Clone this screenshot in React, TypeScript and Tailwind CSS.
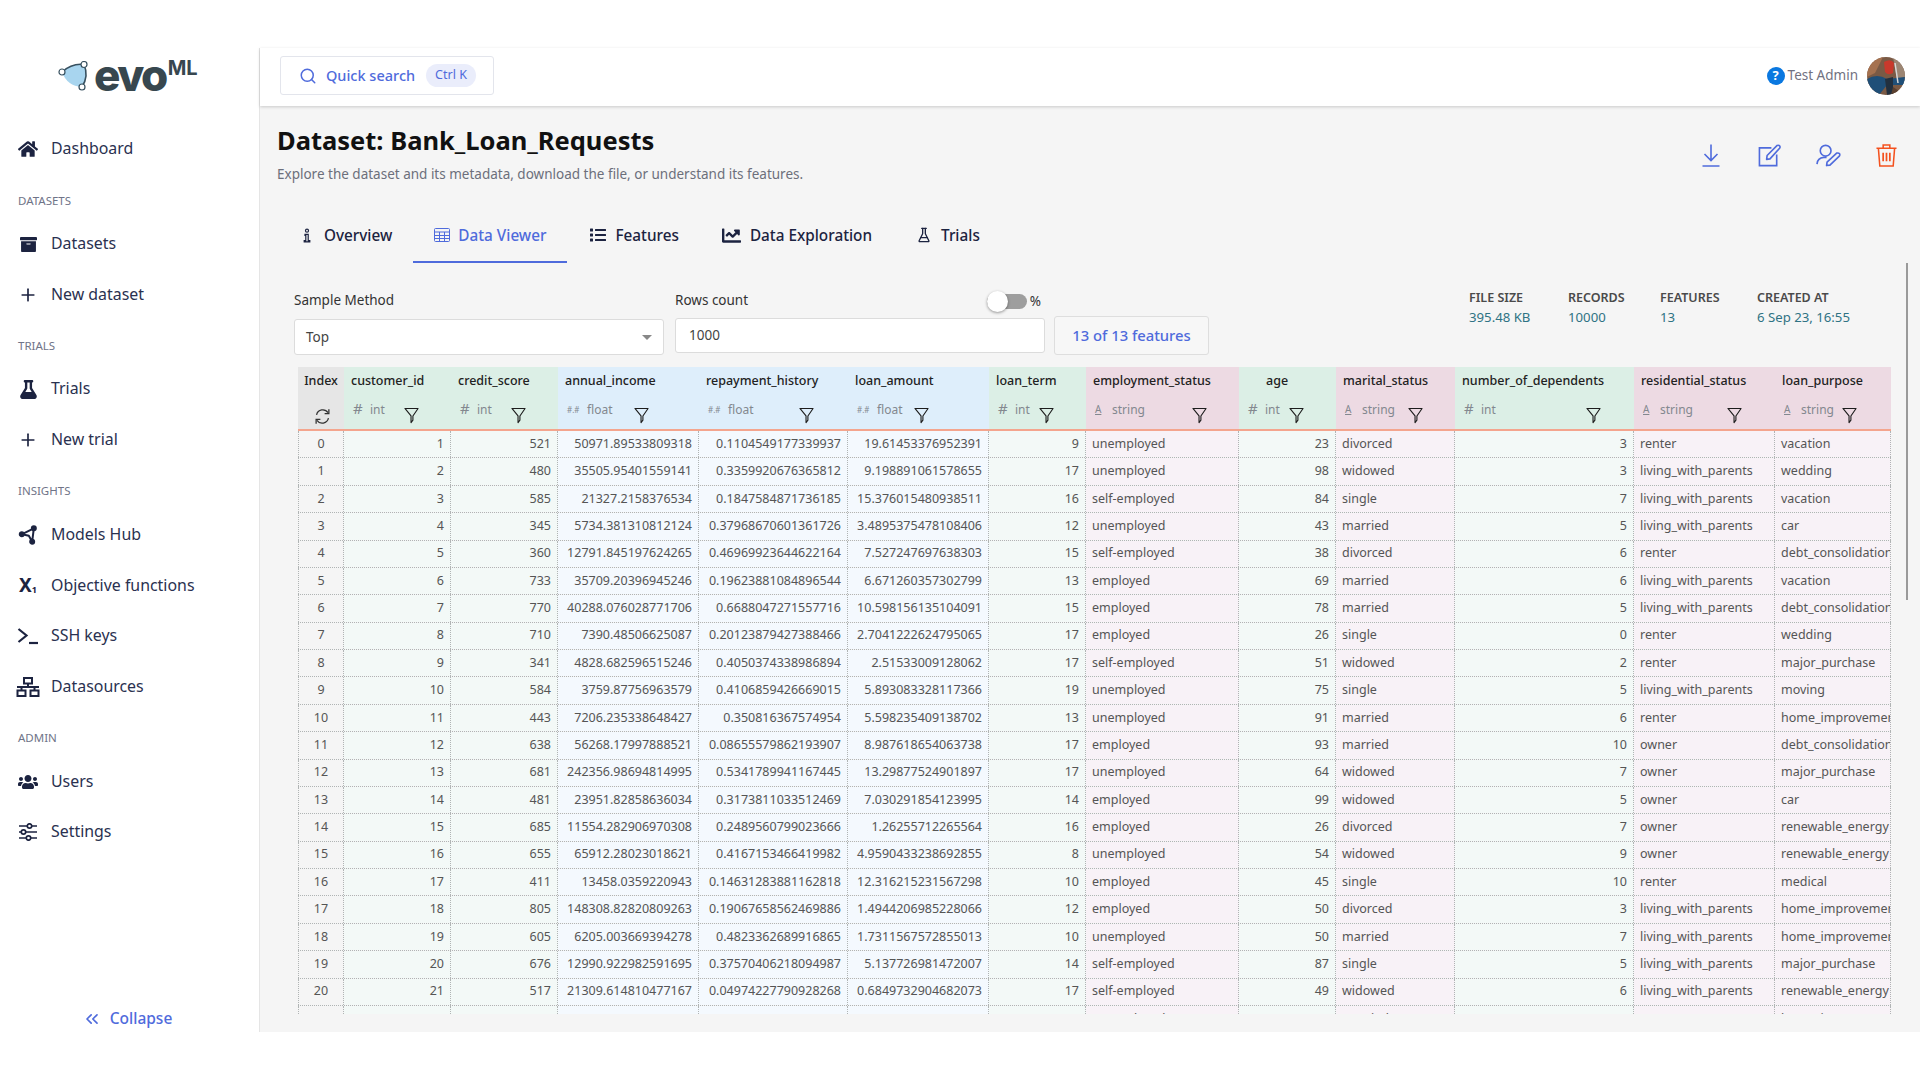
// Dataset page — Data Viewer tab
import React from 'react';
import { FaHome, FaArchive, FaFlask, FaUsers, FaList, FaChartLine } from 'react-icons/fa';
import { LuPlus, LuChevronsLeft, LuSearch, LuFlaskConical } from 'react-icons/lu';

const FONT = "font-['Noto_Sans',sans-serif]";

type Kind = 'int' | 'float' | 'string';

interface Col {
  name: string;
  kind: Kind;
  width: string;
  filterPad: string;
  namePad?: string;
}

const COLS: Col[] = [
  { name: 'customer_id', kind: 'int', width: 'w-[107px]', filterPad: 'pr-[32px]' },
  { name: 'credit_score', kind: 'int', width: 'w-[107px]', filterPad: 'pr-[32px]' },
  { name: 'annual_income', kind: 'float', width: 'w-[141px]', filterPad: 'pr-[50px]' },
  { name: 'repayment_history', kind: 'float', width: 'w-[149px]', filterPad: 'pr-[34px]' },
  { name: 'loan_amount', kind: 'float', width: 'w-[141px]', filterPad: 'pr-[60px]' },
  { name: 'loan_term', kind: 'int', width: 'w-[97px]', filterPad: 'pr-[32px]' },
  { name: 'employment_status', kind: 'string', width: 'w-[153px]', filterPad: 'pr-[32px]' },
  { name: 'age', kind: 'int', width: 'w-[97px]', filterPad: 'pr-[32px]', namePad: 'pl-[27px]' },
  { name: 'marital_status', kind: 'string', width: 'w-[119px]', filterPad: 'pr-[32px]' },
  { name: 'number_of_dependents', kind: 'int', width: 'w-[179px]', filterPad: 'pr-[33px]' },
  { name: 'residential_status', kind: 'string', width: 'w-[141px]', filterPad: 'pr-[33px]' },
  { name: 'loan_purpose', kind: 'string', width: 'w-[116px]', filterPad: 'pr-[34px]' },
];

const HEAD_BG: Record<Kind, string> = {
  int: 'bg-[#dcefe6]',
  float: 'bg-[#deeefb]',
  string: 'bg-[#eddae3]',
};

const CELL_BG: Record<Kind, string> = {
  int: 'bg-[#f3f9f7]',
  float: 'bg-[#f4f9fe]',
  string: 'bg-[#f8f2f7]',
};

const ROWS: string[][] = [
  ['1', '521', '50971.89533809318', '0.1104549177339937', '19.61453376952391', '9', 'unemployed', '23', 'divorced', '3', 'renter', 'vacation'],
  ['2', '480', '35505.95401559141', '0.3359920676365812', '9.198891061578655', '17', 'unemployed', '98', 'widowed', '3', 'living_with_parents', 'wedding'],
  ['3', '585', '21327.2158376534', '0.1847584871736185', '15.376015480938511', '16', 'self-employed', '84', 'single', '7', 'living_with_parents', 'vacation'],
  ['4', '345', '5734.381310812124', '0.37968670601361726', '3.4895375478108406', '12', 'unemployed', '43', 'married', '5', 'living_with_parents', 'car'],
  ['5', '360', '12791.845197624265', '0.46969923644622164', '7.527247697638303', '15', 'self-employed', '38', 'divorced', '6', 'renter', 'debt_consolidation'],
  ['6', '733', '35709.20396945246', '0.19623881084896544', '6.671260357302799', '13', 'employed', '69', 'married', '6', 'living_with_parents', 'vacation'],
  ['7', '770', '40288.076028771706', '0.6688047271557716', '10.598156135104091', '15', 'employed', '78', 'married', '5', 'living_with_parents', 'debt_consolidation'],
  ['8', '710', '7390.48506625087', '0.20123879427388466', '2.7041222624795065', '17', 'employed', '26', 'single', '0', 'renter', 'wedding'],
  ['9', '341', '4828.682596515246', '0.4050374338986894', '2.51533009128062', '17', 'self-employed', '51', 'widowed', '2', 'renter', 'major_purchase'],
  ['10', '584', '3759.87756963579', '0.4106859426669015', '5.893083328117366', '19', 'unemployed', '75', 'single', '5', 'living_with_parents', 'moving'],
  ['11', '443', '7206.235338648427', '0.350816367574954', '5.598235409138702', '13', 'unemployed', '91', 'married', '6', 'renter', 'home_improvement'],
  ['12', '638', '56268.17997888521', '0.08655579862193907', '8.987618654063738', '17', 'employed', '93', 'married', '10', 'owner', 'debt_consolidation'],
  ['13', '681', '242356.98694814995', '0.5341789941167445', '13.29877524901897', '17', 'unemployed', '64', 'widowed', '7', 'owner', 'major_purchase'],
  ['14', '481', '23951.82858636034', '0.3173811033512469', '7.030291854123995', '14', 'employed', '99', 'widowed', '5', 'owner', 'car'],
  ['15', '685', '11554.282906970308', '0.2489560799023666', '1.26255712265564', '16', 'employed', '26', 'divorced', '7', 'owner', 'renewable_energy'],
  ['16', '655', '65912.28023018621', '0.4167153466419982', '4.9590433238692855', '8', 'unemployed', '54', 'widowed', '9', 'owner', 'renewable_energy'],
  ['17', '411', '13458.0359220943', '0.14631283881162818', '12.316215231567298', '10', 'employed', '45', 'single', '10', 'renter', 'medical'],
  ['18', '805', '148308.82820809263', '0.19067658562469886', '1.4944206985228066', '12', 'employed', '50', 'divorced', '3', 'living_with_parents', 'home_improvement'],
  ['19', '605', '6205.003669394278', '0.4823362689916865', '1.7311567572855013', '10', 'unemployed', '50', 'married', '7', 'living_with_parents', 'home_improvement'],
  ['20', '676', '12990.922982591695', '0.37570406218094987', '5.137726981472007', '14', 'self-employed', '87', 'single', '5', 'living_with_parents', 'major_purchase'],
  ['21', '517', '21309.614810477167', '0.04974227790928268', '0.6849732904682073', '17', 'self-employed', '49', 'widowed', '6', 'living_with_parents', 'renewable_energy'],
  ['22', '455', '75511.06745100043', '0.14141460875154111', '5.041741150001147', '20', 'unemployed', '51', 'married', '1', 'renter', 'home_improvement'],
];

// --- icons drawn by hand, the packages have nothing close ---

const ModelsIcon = () => (
  <svg viewBox="0 0 24 24" className="w-[20px] h-[20px]" fill="none" stroke="currentColor" strokeWidth="2.4">
    <path d="M19 4 L5 11 L13 13 L17 20 Z" strokeLinejoin="round" />
    <circle cx="19" cy="4" r="2.4" fill="currentColor" />
    <circle cx="4.5" cy="11" r="2.4" fill="currentColor" />
    <circle cx="17" cy="20" r="2.4" fill="currentColor" />
  </svg>
);

const ObjectiveIcon = () => (
  <span className="w-[20px] h-[20px] flex items-end justify-center text-[19px] leading-[20px] font-bold">
    X<span className="text-[9px] leading-[10px] font-bold">1</span>
  </span>
);

const TerminalIcon = () => (
  <svg viewBox="0 0 22 18" className="w-[22px] h-[18px]" fill="none" stroke="currentColor" strokeWidth="2.2">
    <path d="M1.5 2 L9.5 8.5 L1.5 15" />
    <path d="M12 16 H21" />
  </svg>
);

const SourcesIcon = () => (
  <svg viewBox="0 0 24 20" className="w-[24px] h-[20px]" fill="none" stroke="currentColor" strokeWidth="2">
    <rect x="8" y="1" width="8" height="5.5" />
    <rect x="1.5" y="13.5" width="8" height="5.5" />
    <rect x="14.5" y="13.5" width="8" height="5.5" />
    <path d="M12 6.5 V10 M1 10 H23 M5.5 10 V13.5 M18.5 10 V13.5" />
  </svg>
);

const SlidersIcon = () => (
  <svg viewBox="0 0 20 18" className="w-[20px] h-[18px]" fill="none" stroke="currentColor" strokeWidth="1.7">
    <path d="M1 3 H9 M14 3 H19 M1 9 H3 M8 9 H19 M1 15 H8 M13 15 H19" />
    <circle cx="11.5" cy="3" r="2.2" />
    <circle cx="5.5" cy="9" r="2.2" />
    <circle cx="10.5" cy="15" r="2.2" />
  </svg>
);

const InfoIcon = () => (
  <svg viewBox="0 0 10 18" className="w-[8px] h-[15px]" fill="none" stroke="currentColor" strokeWidth="1.5">
    <circle cx="5" cy="3" r="1.9" />
    <path d="M2.5 7.5 H6.5 V15.5 H8.5 V17 H1.5 V15.5 H3.5 V9 H2.5 Z" />
  </svg>
);

const TableIcon = () => (
  <svg viewBox="0 0 16 14" className="w-[16px] h-[14px]" fill="none" stroke="currentColor" strokeWidth="1">
    <rect x="0.5" y="0.5" width="15" height="13" rx="1" />
    <path d="M0.5 4 H15.5 M0.5 7.5 H15.5 M0.5 10.5 H15.5 M5.5 4 V13.5 M10.5 4 V13.5" />
  </svg>
);

const FunnelIcon = () => (
  <svg viewBox="0 0 16 18" className="w-[15px] h-[17px]" fill="none" stroke="#1d1d1d" strokeWidth="1.2">
    <path d="M1 1.5 H15 L9.5 9.5 V14 L7.5 16.5 V9.5 Z" strokeLinejoin="round" />
  </svg>
);

const SyncIcon = () => (
  <svg viewBox="0 0 20 20" className="w-[17px] h-[17px]" fill="none" stroke="#333" strokeWidth="1.5">
    <path d="M3 8 A7.5 7.5 0 0 1 16.5 5.5" />
    <path d="M17.5 1.5 V6.5 H12.5" />
    <path d="M17 12 A7.5 7.5 0 0 1 3.5 14.5" />
    <path d="M2.5 18.5 V13.5 H7.5" />
  </svg>
);

const DownloadIcon = () => (
  <svg viewBox="0 0 18 23" className="w-[18px] h-[23px]" fill="none" stroke="currentColor" strokeWidth="1.6">
    <path d="M9 0.5 V16 M2.5 10 L9 16.5 L15.5 10 M0.5 22 H17.5" />
  </svg>
);

const EditIcon = () => (
  <svg viewBox="0 0 24 24" className="w-[23px] h-[23px]" fill="none" stroke="currentColor" strokeWidth="1.7">
    <path d="M14 4 H1.5 V22.5 H19.5 V11" />
    <path d="M9 16 L9.5 12 L20 1.5 Q22 1 22.8 2.2 Q23.3 3.5 22.5 4.5 L12.5 15.5 Z" strokeLinejoin="round" />
  </svg>
);

const UserEditIcon = () => (
  <svg viewBox="0 0 26 24" className="w-[25px] h-[23px]" fill="none" stroke="currentColor" strokeWidth="1.7">
    <circle cx="10" cy="7" r="5.6" />
    <path d="M1 21 Q1.5 14.5 8 14 H11" />
    <path d="M11 22.5 L11.5 19 L21.5 9.5 Q23.5 9 24.6 10.2 Q25.2 11.7 24 13 L14.5 22 Z" strokeLinejoin="round" />
  </svg>
);

const TrashIcon = () => (
  <svg viewBox="0 0 22 24" className="w-[21px] h-[23px]" fill="none" stroke="currentColor" strokeWidth="1.6">
    <path d="M0.5 4.5 H21.5 M7.5 4 V1 H14.5 V4" />
    <path d="M2.5 4.5 L4 23 H18 L19.5 4.5" />
    <path d="M7.5 9 V18 M11 9 V18 M14.5 9 V18" strokeWidth="1.8" />
  </svg>
);

const LogoMark = () => (
  <svg viewBox="0 0 32 30" className="w-[32px] h-[30px]" fill="none">
    <path d="M4 11 Q14 2 26 3.5 Q31 15 24 26 Q9 25 4 11 Z" fill="#a8d5ef" />
    <path d="M4 11 Q14 2 26 3.5 Q31 15 24 26" stroke="#37505f" strokeWidth="1.6" />
    <circle cx="4" cy="11" r="3" fill="#fff" stroke="#37505f" strokeWidth="1.2" />
    <circle cx="26" cy="3.5" r="3" fill="#fff" stroke="#37505f" strokeWidth="1.2" />
    <circle cx="24" cy="26" r="3" fill="#fff" stroke="#37505f" strokeWidth="1.2" />
  </svg>
);

const Avatar = () => (
  <svg viewBox="0 0 38 38" className="w-[38px] h-[38px] rounded-full">
    <rect width="38" height="38" fill="#7a5a45" />
    <path d="M0 0 H16 L8 16 L0 20 Z" fill="#a5714f" />
    <path d="M26 0 H38 V20 L30 22 Z" fill="#9c8674" />
    <path d="M0 22 Q10 16 20 22 L38 20 V28 L20 28 L12 38 H0 Z" fill="#1f4f78" />
    <path d="M18 22 L26 20 L26 38 L20 38 Z" fill="#22303f" />
    <path d="M17 5 Q24 1 27 6 L26 16 Q21 19 18 15 Z" fill="#c8392c" />
    <path d="M28 6 L31 26" stroke="#d8d8d8" strokeWidth="1.5" />
    <path d="M26 30 L38 38 H24 Z" fill="#5b4030" />
  </svg>
);

// --- sidebar ---

const NavItem: React.FC<{ icon: React.ReactNode; label: string }> = ({ icon, label }) => (
  <div className="h-[50.7px] flex items-center text-[#1c2340]">
    <span className="w-[24px] ml-[16px] flex justify-center text-[20px]">{icon}</span>
    <span className="ml-[11px] text-[15.9px] text-[#2a3150]">{label}</span>
  </div>
);

const NavLabel: React.FC<{ label: string }> = ({ label }) => (
  <div className="h-[44px] pl-[18px] pt-[18px] text-[11.5px] leading-[16px] text-[#6f7488]">{label}</div>
);

const Sidebar = () => (
  <aside className="w-[260px] shrink-0 flex flex-col border-r border-[#e5e5e5] bg-white">
    <div className="h-[76px] flex items-start pl-[58px] pt-[10px]">
      <span className="mt-[3px]"><LogoMark /></span>
      <span className="ml-[4px] mt-[-2px] text-[44px] leading-[38px] font-extrabold tracking-[-2.5px] text-[#37474f] font-['Inter',sans-serif]">evo</span>
      <span className="ml-[2px] mt-[-1px] text-[20px] leading-[22px] font-bold text-[#37474f] font-['Inter',sans-serif]">ML</span>
    </div>
    <NavItem icon={<FaHome />} label="Dashboard" />
    <NavLabel label="DATASETS" />
    <NavItem icon={<FaArchive className="text-[17px]" />} label="Datasets" />
    <NavItem icon={<LuPlus />} label="New dataset" />
    <NavLabel label="TRIALS" />
    <NavItem icon={<FaFlask className="text-[19px]" />} label="Trials" />
    <NavItem icon={<LuPlus />} label="New trial" />
    <NavLabel label="INSIGHTS" />
    <NavItem icon={<ModelsIcon />} label="Models Hub" />
    <NavItem icon={<ObjectiveIcon />} label="Objective functions" />
    <NavItem icon={<TerminalIcon />} label="SSH keys" />
    <NavItem icon={<SourcesIcon />} label="Datasources" />
    <NavLabel label="ADMIN" />
    <NavItem icon={<FaUsers />} label="Users" />
    <NavItem icon={<SlidersIcon />} label="Settings" />
    <div className="mt-auto h-[26px] pr-[5px] flex items-center justify-center gap-[8px] text-[#4f6bdc] text-[15.5px] font-medium">
      <LuChevronsLeft className="text-[20px]" />
      <span>Collapse</span>
    </div>
  </aside>
);

// --- top bar ---

const TopBar = () => (
  <header className="h-[58px] shrink-0 bg-white flex items-center justify-between pl-[20px] pr-[15px] pb-[3px] shadow-[0_1px_3px_rgba(0,0,0,0.18)] z-10">
    <div className="w-[214px] h-[39px] flex items-center border border-[#e3e5ec] rounded-[3px] pl-[18px] text-[#4f6bdc]">
      <LuSearch className="text-[18px]" />
      <span className="ml-[9px] text-[14.5px] font-medium">Quick search</span>
      <span className="ml-[11px] h-[23px] px-[9px] flex items-center rounded-full bg-[#eaedfb] text-[12.5px]">Ctrl K</span>
    </div>
    <div className="flex items-center">
      <span className="w-[18px] h-[18px] rounded-full bg-[#0a78e0] text-white text-[13px] font-bold flex items-center justify-center">?</span>
      <span className="ml-[3px] text-[13.5px] text-[#71717f]">Test Admin</span>
      <span className="ml-[9px]"><Avatar /></span>
    </div>
  </header>
);

// --- tabs, form, meta ---

const Tab: React.FC<{ icon: React.ReactNode; iconWidth: string; label: string; active?: boolean }> = ({ icon, iconWidth, label, active }) => (
  <div className={`h-[56px] px-[21px] flex items-center gap-[8px] border-b-[2px] pt-[2px] text-[15.3px] font-medium ${active ? 'border-[#4f6bdc] text-[#4f6bdc]' : 'border-transparent text-[#1c2340]'}`}>
    <span className={`${iconWidth} flex justify-center`}>{icon}</span>
    <span>{label}</span>
  </div>
);

const Meta: React.FC<{ label: string; value: string; width: string }> = ({ label, value, width }) => (
  <div className={`${width} shrink-0`}>
    <div className="text-[12.5px] leading-[18px] font-semibold text-[#4a4a4a]">{label}</div>
    <div className="text-[13.2px] leading-[20px] text-[#2f7384]">{value}</div>
  </div>
);

const ControlRow = () => (
  <div className="flex items-end ml-[34px] mt-[27px] relative">
    <div className="w-[370px]">
      <div className="text-[13.5px] leading-[20px] text-[#333] mb-[9px]">Sample Method</div>
      <div className="h-[36px] flex items-center justify-between bg-white border border-[#dcdcdc] rounded-[3px] pl-[11px] pr-[11px] text-[13.5px] text-[#444]">
        <span>Top</span>
        <span className="w-0 h-0 border-x-[5px] border-x-transparent border-t-[5px] border-t-[#888]" />
      </div>
    </div>
    <div className="w-[370px] ml-[11px] mb-[2px]">
      <div className="flex items-start justify-between h-[28px]">
        <span className="text-[13.5px] leading-[20px] text-[#333]">Rows count</span>
        <div className="flex items-center h-[23px] pr-[4px]">
          <span className="relative w-[40px] h-[15px] rounded-full bg-[#9e9e9e] block">
            <span className="absolute left-0 top-[-3px] w-[21px] h-[21px] rounded-full bg-white shadow-[0_1px_3px_rgba(0,0,0,0.4)]" />
          </span>
          <span className="ml-[3px] text-[13.5px] text-[#333]">%</span>
        </div>
      </div>
      <div className="h-[35px] flex items-center bg-white border border-[#dcdcdc] rounded-[3px] pl-[13px] text-[13.5px] text-[#444]">1000</div>
    </div>
    <div className="w-[155px] h-[39px] ml-[9px] flex items-center justify-center bg-[#f7f7f7] border border-[#dedede] rounded-[3px] text-[14.8px] text-[#4f6bdc] font-medium">
      13 of 13 features
    </div>
    <div className="flex self-start ml-[260px] mt-[-1px]">
      <Meta label="FILE SIZE" value="395.48 KB" width="w-[99px]" />
      <Meta label="RECORDS" value="10000" width="w-[92px]" />
      <Meta label="FEATURES" value="13" width="w-[97px]" />
      <Meta label="CREATED AT" value="6 Sep 23, 16:55" width="w-[130px]" />
    </div>
  </div>
);

// --- data table ---

const TypeBadge: React.FC<{ kind: Kind }> = ({ kind }) => (
  <span className="flex items-center text-[#83888f] text-[12px]">
    {kind === 'int' && <span className="w-[17px] text-[15px] leading-[14px] mt-[-4px]">#</span>}
    {kind === 'float' && <span className="w-[20px] text-[8px]">#.#</span>}
    {kind === 'string' && <span className="w-[17px] text-[10px] leading-[10px] underline mt-[-3px]">A</span>}
    <span>{kind}</span>
  </span>
);

const HeaderCell: React.FC<{ col: Col }> = ({ col }) => (
  <div className={`${col.width} ${HEAD_BG[col.kind]} shrink-0 h-full flex flex-col overflow-hidden`}>
    <div className={`h-[24px] flex items-end text-[12.5px] font-medium text-[#222] whitespace-nowrap ${col.namePad ?? 'pl-[7px]'}`}>{col.name}</div>
    <div className={`flex-1 flex items-center justify-between pl-[9px] ${col.filterPad}`}>
      <TypeBadge kind={col.kind} />
      <span className="mt-[10px]"><FunnelIcon /></span>
    </div>
  </div>
);

const Cell: React.FC<{ col: Col; value: string }> = ({ col, value }) => (
  <div className={`${col.width} ${CELL_BG[col.kind]} shrink-0 h-full flex items-center overflow-hidden whitespace-nowrap border-r border-dotted border-[#b0b4b4] ${col.kind === 'string' ? 'pl-[6px]' : 'justify-end pr-[6px]'}`}>
    {value}
  </div>
);

const DataTable = () => (
  <div className="ml-[38px] mr-[29px] mt-[12px] mb-[18px] flex-1 min-h-0 overflow-hidden text-[12.5px] text-[#555]">
    <div className="h-[64px] flex border-b-[2px] border-[#f4a58e]">
      <div className="w-[46px] shrink-0 h-full bg-[#e6e6e6] flex flex-col items-center">
        <div className="h-[24px] flex items-end text-[12.5px] font-medium text-[#222]">Index</div>
        <div className="flex-1 flex items-center pt-[12px] pl-[3px]"><SyncIcon /></div>
      </div>
      {COLS.map((col) => <HeaderCell key={col.name} col={col} />)}
    </div>
    {ROWS.map((row, i) => (
      <div key={i} className="h-[27.38px] flex border-b border-dotted border-[#b0b4b4]">
        <div className="w-[46px] shrink-0 h-full bg-[#f5f5f5] flex items-center justify-center border-x border-dotted border-[#b0b4b4]">{i}</div>
        {COLS.map((col, j) => <Cell key={col.name} col={col} value={row[j]} />)}
      </div>
    ))}
  </div>
);

export default function App() {
  return (
    <div className={`${FONT} w-[1920px] h-[1080px] bg-white py-[48px] flex overflow-hidden`}>
      <Sidebar />
      <main className="flex-1 min-w-0 flex flex-col bg-[#f5f5f5] relative">
        <TopBar />
        <div className="pl-[17px] pr-[23px] pt-[17px] flex items-start justify-between shrink-0">
          <div>
            <h1 className="text-[25.5px] leading-[34px] font-bold text-[#111]">Dataset: Bank_Loan_Requests</h1>
            <p className="mt-[7px] text-[13.5px] leading-[20px] text-[#6c6f7b]">Explore the dataset and its metadata, download the file, or understand its features.</p>
          </div>
          <div className="flex items-center mt-[21px]">
            <span className="text-[#4f6bdc]"><DownloadIcon /></span>
            <span className="ml-[38px] text-[#4f6bdc]"><EditIcon /></span>
            <span className="ml-[35px] text-[#4f6bdc]"><UserEditIcon /></span>
            <span className="ml-[35px] text-[#f4511e]"><TrashIcon /></span>
          </div>
        </div>
        <div className="flex pl-[17px] mt-[23px] shrink-0">
          <Tab icon={<InfoIcon />} iconWidth="w-[18px]" label="Overview" />
          <Tab icon={<TableIcon />} iconWidth="w-[16px]" label="Data Viewer" active />
          <Tab icon={<FaList className="text-[16px]" />} iconWidth="w-[19px]" label="Features" />
          <Tab icon={<FaChartLine className="text-[19px]" />} iconWidth="w-[21px]" label="Data Exploration" />
          <Tab icon={<LuFlaskConical className="text-[16px]" />} iconWidth="w-[19px]" label="Trials" />
        </div>
        <ControlRow />
        <DataTable />
        <span className="absolute right-[12px] top-[215px] w-[2px] h-[337px] bg-[#9a9a9a]" />
      </main>
    </div>
  );
}
